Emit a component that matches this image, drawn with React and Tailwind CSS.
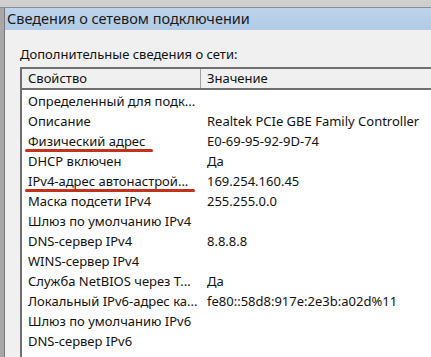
import React from 'react';

const rows = [
  ['Определенный для подк...', ''],
  ['Описание', 'Realtek PCIe GBE Family Controller'],
  ['Физический адрес', 'E0-69-95-92-9D-74', 'w-[128px]'],
  ['DHCP включен', 'Да'],
  ['IPv4-адрес автонастрой...', '169.254.160.45', 'w-[170px]'],
  ['Маска подсети IPv4', '255.255.0.0'],
  ['Шлюз по умолчанию IPv4', ''],
  ['DNS-сервер IPv4', '8.8.8.8'],
  ['WINS-сервер IPv4', ''],
  ['Служба NetBIOS через T...', 'Да'],
  ['Локальный IPv6-адрес ка...', 'fe80::58d8:917e:2e3b:a02d%11'],
  ['Шлюз по умолчанию IPv6', ''],
  ['DNS-сервер IPv6', ''],
];

function Row ({ name, value, mark }) {
  return (
    <div className="flex h-5 items-center">
      <div className="relative w-[179px] shrink-0 pl-[6px] whitespace-nowrap overflow-hidden">
        {name}
        {mark && (
          <span className={`absolute left-[3px] top-[17px] h-[3px] rounded-full bg-[#c1321f] ${mark}`} />
        )}
      </div>
      <div className="pl-[6px] whitespace-nowrap">{value}</div>
    </div>
  );
}

export default function App () {
  return (
    <div className="w-[431px] h-[357px] overflow-hidden bg-[#a8a8a8] text-[#111] font-['Noto_Sans',sans-serif]">
      <div className="h-[8px] bg-[#cfcfcf] border-b border-[#8f8f8f]" />
      <div className="ml-[4px] h-[349px] border-l border-[#7a7a7a] bg-[#f0f0f0] flex flex-col">
        <div className="h-[24px] flex items-center pl-[2px] bg-gradient-to-b from-[#bcd4ec] to-[#b2cbe5] text-[14.5px] text-[#1a1a1a]">
          Сведения о сетевом подключении
        </div>
        <div className="pl-[15px] pt-[16px] text-[13px]">
          <div className="leading-[17px] mb-[4px]">Дополнительные сведения о сети:</div>
          <div className="border-l-2 border-t-2 border-[#6f6f6f] bg-white h-[400px]">
            <div className="flex h-[21px] items-center bg-[#f0f0f0] border-b-2 border-[#6f6f6f]">
              <div className="w-[179px] shrink-0 pl-[6px] h-full flex items-center border-r border-[#a0a0a0]">Свойство</div>
              <div className="pl-[6px]">Значение</div>
            </div>
            <div className="pt-[2px]">
              {rows.map(([n, v, m], i) => (
                <Row key={i} name={n} value={v} mark={m} />
              ))}
            </div>
          </div>
        </div>
      </div>
    </div>
  );
}
